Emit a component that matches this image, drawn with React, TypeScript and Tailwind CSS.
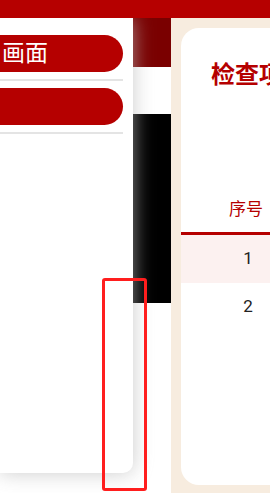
const menu = ["画面", ""]

const rows = [1, 2]

export default function App() {
  return (
    <div
      className="relative flex h-[493px] w-[270px] flex-col overflow-hidden bg-white"
      style={{ fontFamily: "Roboto, 'Noto Sans CJK SC', sans-serif" }}
    >
      {/* top bar */}
      <div className="relative z-20 h-[18px] shrink-0 bg-[#b60000]" />

      <div className="flex flex-1">
        {/* drawer panel */}
        <div className="relative z-10 mb-[20px] w-[133px] shrink-0 rounded-br-[10px] bg-white pt-[17px] shadow-[0_0_20px_rgba(185,185,185,0.75)]">
          {menu.map((label, i) => (
            <div key={i}>
              <div className="flex h-[37px] w-[123px] items-center rounded-r-full bg-[#b50000] pl-[2px] text-[23px] leading-none text-white">
                {label}
              </div>
              <div className="mt-[7px] mb-[7px] h-[2px] w-[123px] bg-[#e4e4e4]" />
            </div>
          ))}
        </div>

        {/* strip behind the drawer */}
        <div className="flex w-[38px] shrink-0 flex-col">
          <div className="h-[49px] bg-[#7a0000]" />
          <div className="h-[47px] bg-white" />
          <div className="h-[189px] bg-black" />
          <div className="flex-1 bg-white" />
        </div>

        {/* main area */}
        <div className="flex flex-1 flex-col bg-[#f7ecdf] pt-[10px] pb-[8px] pl-[10px]">
          <div className="flex-1 overflow-hidden rounded-l-[18px] bg-white">
            <div className="whitespace-nowrap pt-[33px] pl-[30px] text-[24px] leading-[28px] font-bold text-[#b50000]">
              检查项目列表
            </div>
            <div className="mt-[98px]">
              <div className="flex h-[48px] items-center border-b-[3px] border-[#b50000]">
                <div className="w-[130px] shrink-0 text-center text-[17px] text-[#b50000]">序号</div>
              </div>
              {rows.map((n, i) => (
                <div
                  key={n}
                  className={`flex h-[48px] items-center ${i % 2 === 0 ? "bg-[#fcf1f0]" : "bg-white"}`}
                >
                  <div className="w-[134px] shrink-0 text-center text-[17px] text-[#222]">{n}</div>
                </div>
              ))}
            </div>
          </div>
        </div>
      </div>

      {/* highlight annotation */}
      <div className="absolute top-[278px] left-[102px] z-30 h-[213px] w-[45px] rounded-[3px] border-[3px] border-[#ff1e1e]" />
    </div>
  )
}
